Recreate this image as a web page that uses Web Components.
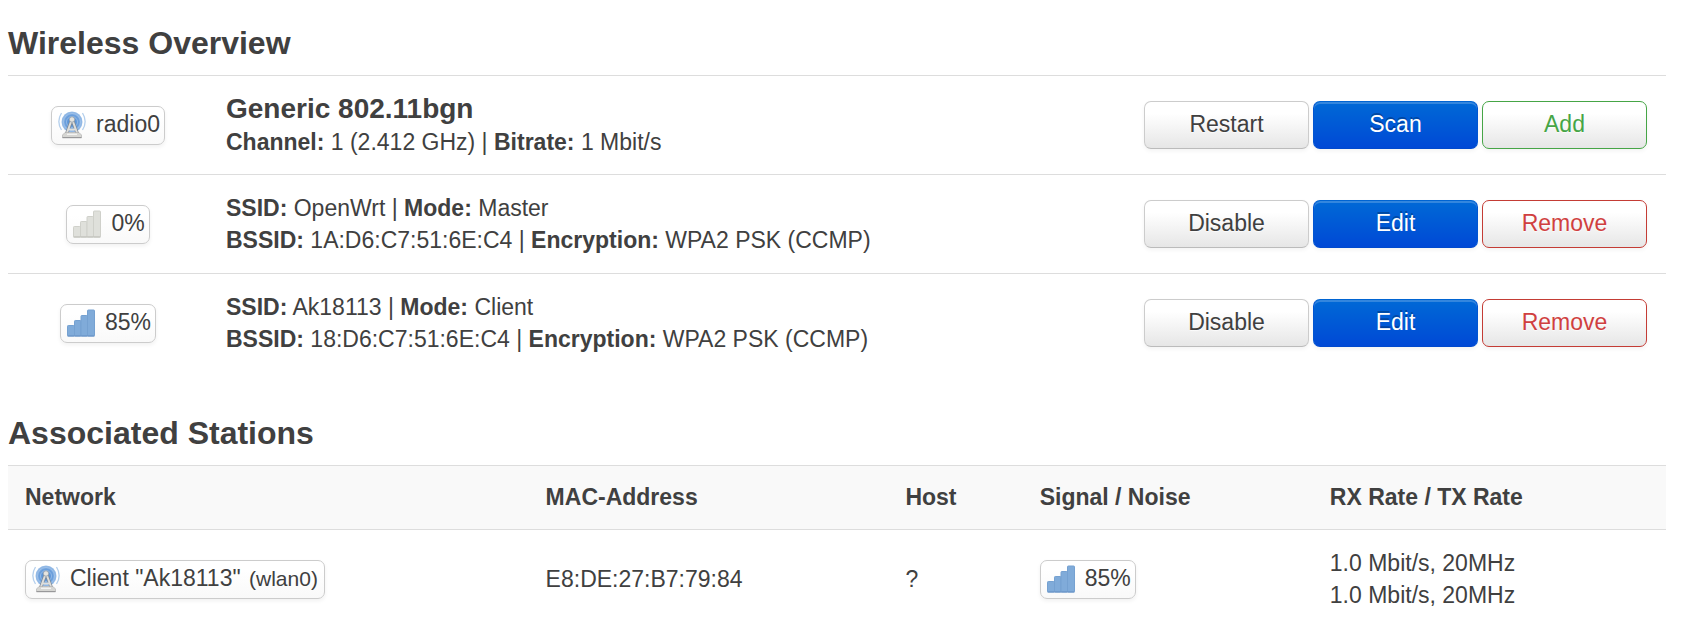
<!DOCTYPE html>
<html lang="en">
<head>
<meta charset="utf-8">
<title>Wireless Overview</title>
<style>
body { margin: 0; background: #fff; color: #404040; font: 23px/32px "Liberation Sans", Arial, sans-serif; }
</style>
</head>
<body>
<wireless-page></wireless-page>

<template id="t-page">
<style>
:host { display: block; padding: 11px 20px 0 8px; }
wifi-section + wifi-section { margin-top: 29px; }
</style>
<wifi-section heading="Wireless Overview">
  <wifi-row>
    <wifi-badge slot="badge" icon="radio">radio0</wifi-badge>
    <wifi-title>Generic 802.11bgn</wifi-title>
    <div><b>Channel:</b> 1 (2.412 GHz) | <b>Bitrate:</b> 1 Mbit/s</div>
    <wifi-button slot="actions">Restart</wifi-button>
    <wifi-button slot="actions" kind="primary">Scan</wifi-button>
    <wifi-button slot="actions" kind="add">Add</wifi-button>
  </wifi-row>
  <wifi-row>
    <wifi-badge slot="badge" icon="signal-none">0%</wifi-badge>
    <div><b>SSID:</b> OpenWrt | <b>Mode:</b> Master</div>
    <div><b>BSSID:</b> 1A:D6:C7:51:6E:C4 | <b>Encryption:</b> WPA2 PSK (CCMP)</div>
    <wifi-button slot="actions">Disable</wifi-button>
    <wifi-button slot="actions" kind="primary">Edit</wifi-button>
    <wifi-button slot="actions" kind="remove">Remove</wifi-button>
  </wifi-row>
  <wifi-row>
    <wifi-badge slot="badge" icon="signal">85%</wifi-badge>
    <div><b>SSID:</b> Ak18113 | <b>Mode:</b> Client</div>
    <div><b>BSSID:</b> 18:D6:C7:51:6E:C4 | <b>Encryption:</b> WPA2 PSK (CCMP)</div>
    <wifi-button slot="actions">Disable</wifi-button>
    <wifi-button slot="actions" kind="primary">Edit</wifi-button>
    <wifi-button slot="actions" kind="remove">Remove</wifi-button>
  </wifi-row>
</wifi-section>
<wifi-section heading="Associated Stations">
  <station-table></station-table>
</wifi-section>
</template>

<template id="t-section">
<style>
:host { display: block; }
h2 { margin: 0; font-size: 32px; line-height: 64px; font-weight: bold; }
</style>
<h2></h2>
<slot></slot>
</template>

<template id="t-title">
<style>
:host { display: block; }
h3 { margin: 0; font-size: 28px; line-height: 34px; }
</style>
<h3><slot></slot></h3>
</template>

<template id="t-row">
<style>
:host { display: grid; grid-template-columns: 200px 1fr auto; align-items: center; min-height: 98px; border-top: 1px solid #ddd; }
.badge { display: flex; justify-content: center; }
.info { padding: 0 18px; }
.actions { display: flex; gap: 4px; padding-right: 19px; }
</style>
<div class="badge"><slot name="badge"></slot></div>
<div class="info"><slot></slot></div>
<div class="actions"><slot name="actions"></slot></div>
</template>

<template id="t-button">
<style>
:host { display: block; }
button {
  display: block; box-sizing: border-box; width: 165px; height: 48px; margin: 0; padding: 0 0 2px;
  font: inherit; color: #404040; text-align: center;
  text-shadow: 0 1px 1px rgba(255,255,255,.75);
  background: linear-gradient(#fff, #fff 25%, #e6e6e6);
  border: 1px solid #ccc; border-bottom-color: #bbb; border-radius: 7px;
  box-shadow: inset 0 2px 0 rgba(255,255,255,.2), 0 2px 4px rgba(0,0,0,.05);
}
:host([kind="primary"]) button {
  color: #fff; text-shadow: 0 -2px 0 rgba(0,0,0,.25);
  background: linear-gradient(#0069d6, #0049d6); border-color: #0064d2 #0055d2 #0049cd;
}
:host([kind="add"]) button { color: #46a546; border-color: #46a546; }
:host([kind="remove"]) button { color: #d04040; border-color: #c43c35; }
</style>
<button type="button"><slot></slot></button>
</template>

<template id="t-badge">
<style>
:host {
  display: inline-flex; align-items: center; gap: 10px; box-sizing: border-box; height: 39px; padding: 0 4px 0 6px;
  border: 1px solid #ccc; border-radius: 7px; white-space: nowrap; vertical-align: middle;
  background: linear-gradient(#fff, #fff 25%, #f9f9f9); box-shadow: 0 2px 4px rgba(0,0,0,.06);
}
span { padding-bottom: 2px; }
</style>
<wifi-icon></wifi-icon>
<span><slot></slot></span>
</template>

<template id="t-radio">
<svg width="28" height="28" viewBox="0 0 28 28" aria-hidden="true">
  <defs>
    <radialGradient id="glow"><stop offset="0" stop-color="#4a88d2"/><stop offset=".65" stop-color="#6b9fdc"/><stop offset="1" stop-color="#9dc0e8"/></radialGradient>
  </defs>
  <circle cx="14" cy="11" r="10.500" fill="url(#glow)"/>
  <g fill="none" stroke="#b9d3f0" stroke-opacity=".6" stroke-width=".9"><circle cx="14" cy="11" r="5.500"/><circle cx="14" cy="11" r="8.500"/></g>
  <g fill="none" stroke="#b4cfec" stroke-width="1.300"><path d="M3.500 2Q-1.800 10.500 3.500 19M24.500 2Q29.800 10.500 24.500 19"/></g>
  <path d="M14 8L8.500 23M14 8l5.500 15" stroke="#7f8993" stroke-width="3.400" stroke-linecap="round"/>
  <path d="M14 8L8.500 23M14 8l5.500 15M10.500 18.500h7" stroke="#dededc" stroke-width="2" stroke-linecap="round"/>
  <circle cx="14" cy="8.500" r="2.700" fill="#e6e4de" stroke="#8795a5" stroke-width=".7"/>
  <path d="M4.500 24l2.500-2.500h14l2.500 2.500v2.500h-19z" fill="#d6d6d3" stroke="#aaa" stroke-width=".6"/>
  <path d="M9 23.300h10" stroke="#f7f7f5" stroke-width="1.200"/><path d="M4.500 26.700h19" stroke="#8e8e90"/>
</svg>
</template>

<template id="t-bars">
<svg width="28" height="28" viewBox="0 0 28 28" aria-hidden="true">
  <g class="bars">
    <rect x=".5" y="16.500" width="7" height="10.500" rx=".8"/>
    <rect x="7.500" y="11.500" width="6.500" height="15.500" rx=".8"/>
    <rect x="14" y="6.500" width="6.500" height="20.500" rx=".8"/>
    <rect x="20.500" y="1" width="7" height="26" rx=".8"/>
  </g>
  <path d="M.5 27h27" class="foot"/>
</svg>
</template>

<template id="t-table">
<style>
:host { display: block; }
table { width: 100%; table-layout: fixed; border-collapse: separate; border-spacing: 0; }
th, td { box-sizing: border-box; padding: 16px 17px; text-align: left; vertical-align: middle; border-top: 1px solid #ddd; }
th { background: #f9f9f9; padding: 15px 17px 16px; }
td { padding: 17px; }
small { font-size: 21px; margin: 0 2px; }
</style>
<table>
  <colgroup><col style="width:31.4%"><col style="width:21.7%"><col style="width:8.1%"><col style="width:17.5%"><col></colgroup>
  <thead><tr><th>Network</th><th>MAC-Address</th><th>Host</th><th>Signal / Noise</th><th>RX Rate / TX Rate</th></tr></thead>
  <tbody><tr>
    <td><wifi-badge icon="radio">Client "Ak18113" <small>(wlan0)</small></wifi-badge></td>
    <td>E8:DE:27:B7:79:84</td>
    <td>?</td>
    <td><wifi-badge icon="signal">85%</wifi-badge></td>
    <td>1.0 Mbit/s, 20MHz<br>1.0 Mbit/s, 20MHz</td>
  </tr></tbody>
</table>
</template>

<script>
class Base extends HTMLElement {
  constructor(id) {
    super();
    this.attachShadow({ mode: "open" });
    if (id) this.shadowRoot.append(document.getElementById(id).content.cloneNode(true));
  }
}
const simple = (name, id) => customElements.define(name, class extends Base { constructor() { super(id); } });

customElements.define("wifi-icon", class extends Base {
  static observedAttributes = ["name"];
  attributeChangedCallback() {
    const name = this.getAttribute("name");
    const on = name === "signal";
    const style = document.createElement("style");
    style.textContent = ":host{display:block;width:28px;height:28px}svg{display:block}"
      + ".bars{stroke-width:1;" + (on ? "fill:#80abd9;stroke:#75a1d1" : "fill:#dfe0db;stroke:#cfd0ca") + "}"
      + ".foot{stroke-width:1;stroke:" + (on ? "#6690c4" : "#bcbdb6") + "}";
    const art = document.getElementById(name === "radio" ? "t-radio" : "t-bars");
    this.shadowRoot.replaceChildren(style, art.content.cloneNode(true));
  }
});
customElements.define("wifi-badge", class extends Base {
  constructor() { super("t-badge"); }
  connectedCallback() { this.shadowRoot.querySelector("wifi-icon").setAttribute("name", this.getAttribute("icon")); }
});
customElements.define("wifi-section", class extends Base {
  constructor() { super("t-section"); }
  connectedCallback() { this.shadowRoot.querySelector("h2").textContent = this.getAttribute("heading"); }
});
simple("wifi-title", "t-title");
simple("wifi-button", "t-button");
simple("wifi-row", "t-row");
simple("station-table", "t-table");
simple("wireless-page", "t-page");
</script>
</body>
</html>
